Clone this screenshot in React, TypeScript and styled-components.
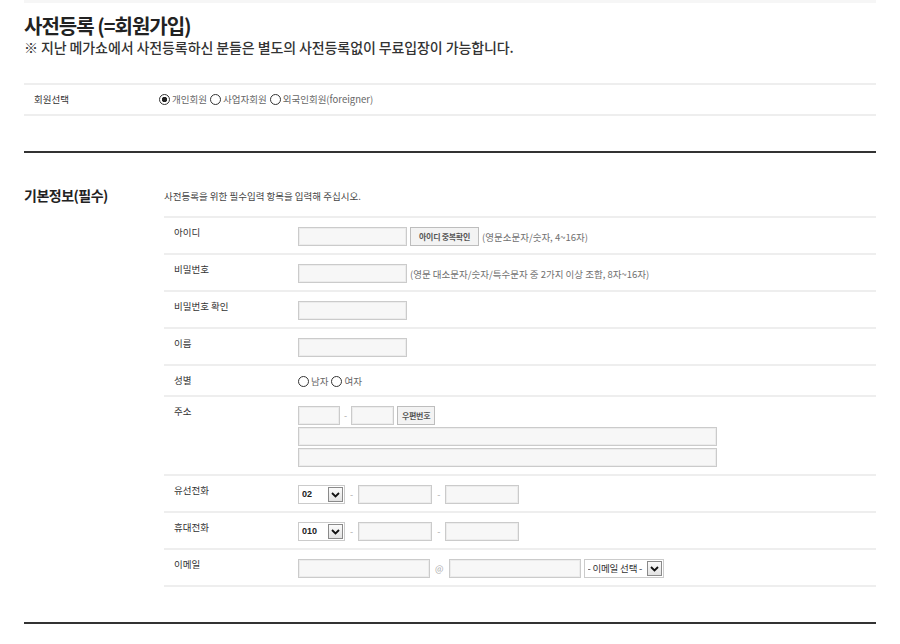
import styled, { createGlobalStyle } from 'styled-components'

const GlobalStyle = createGlobalStyle`
  body {
    margin: 0;
    background: #fff;
    font-family: "Noto Sans CJK KR", "Noto Sans", sans-serif;
    color: #333;
  }
  * {
    box-sizing: border-box;
  }
`

const Page = styled.main`
  width: 900px;
  padding: 0 24px;
`

const TopRule = styled.div`
  height: 3px;
  background: #f6f6f6;
`

const Header = styled.header`
  padding-top: 11px;
`

const Title = styled.h1`
  margin: 0;
  font-size: 20px;
  line-height: 24px;
  font-weight: 700;
  color: #222;
  letter-spacing: -1px;
`

const Notice = styled.p`
  margin: 1px 0 0;
  font-size: 14px;
  line-height: 17px;
  font-weight: 500;
  color: #333;
  letter-spacing: -0.1px;
`

const MemberRow = styled.div`
  display: flex;
  align-items: center;
  margin-top: 27px;
  padding: 7px 0 8px 10px;
  border-top: 2px solid #eee;
  border-bottom: 2px solid #eee;
  font-size: 9.5px;
  line-height: 14px;
`

const MemberLabel = styled.span`
  width: 125px;
  color: #333;
`

const RadioGroup = styled.div`
  display: flex;
  align-items: center;
  gap: 3px;
`

const RadioLabel = styled.label`
  display: inline-flex;
  align-items: center;
  gap: 2px;
  font-size: 9.5px;
  line-height: 14px;
  color: #666;
`

const Radio = styled.input.attrs({ type: 'radio' })`
  appearance: none;
  margin: 0;
  width: 11px;
  height: 11px;
  border: 1px solid #333;
  border-radius: 50%;
  background: #fff;

  &:checked {
    background: radial-gradient(circle, #222 0 2.4px, #fff 3px);
  }
`

const Section = styled.section`
  display: grid;
  grid-template-columns: 140px 1fr;
  margin-top: 35px;
  padding: 32px 0 35px;
  border-top: 2px solid #333;
  border-bottom: 2px solid #333;
`

const SectionTitle = styled.h2`
  margin: 0;
  font-size: 14px;
  line-height: 20px;
  font-weight: 700;
  color: #222;
  letter-spacing: -0.5px;
`

const SectionBody = styled.div`
  padding-top: 4px;
`

const Guide = styled.p`
  margin: 0 0 13px;
  font-size: 9.5px;
  line-height: 14px;
  color: #444;
`

const FormTable = styled.div`
  border-top: 2px solid #eee;
`

const FormRow = styled.div`
  display: flex;
  border-bottom: 2px solid #eee;
`

const RowLabel = styled.div`
  width: 134px;
  padding: 7px 0 0 10px;
  font-size: 9.5px;
  line-height: 14px;
  color: #333;
`

const RowField = styled.div<{ $tight?: boolean }>`
  flex: 1;
  display: flex;
  flex-direction: column;
  gap: 2px;
  padding: ${({ $tight }) => ($tight ? '8px 0 7px' : '9px 0 7px')};
`

const FieldLine = styled.div`
  display: flex;
  align-items: center;
  gap: 3px;
`

const TextInput = styled.input.attrs({ type: 'text' })<{ $w: number }>`
  flex: none;
  width: ${({ $w }) => $w}px;
  height: 19px;
  margin: 0;
  padding: 0 4px;
  border: 1px solid #cbcbcb;
  box-shadow: inset 0 0 0 1px #ececec;
  background: #f7f7f7;
  font-size: 9.5px;
  font-family: inherit;
`

const SmallButton = styled.button<{ $w: number }>`
  flex: none;
  width: ${({ $w }) => $w}px;
  height: 19px;
  margin: 0;
  padding: 0;
  border: 1px solid #bdbdbd;
  background: #f3f3f3;
  font-family: inherit;
  font-size: 8px;
  font-weight: 700;
  color: #555;
  letter-spacing: -0.3px;
`

const Helper = styled.span`
  font-size: 9.5px;
  line-height: 14px;
  color: #707070;
  white-space: nowrap;
`

const Joiner = styled.span<{ $gap: number }>`
  margin: 0 ${({ $gap }) => $gap}px;
  font-size: 9px;
  line-height: 14px;
  color: #aaa;
`

const SelectWrap = styled.div<{ $w: number }>`
  position: relative;
  flex: none;
  width: ${({ $w }) => $w}px;
  height: 19px;
`

const Select = styled.select`
  appearance: none;
  display: block;
  width: 100%;
  height: 19px;
  margin: 0;
  padding: 0 0 0 3px;
  border: 1px solid #cbcbcb;
  border-radius: 0;
  background: #fff;
  font-family: "Liberation Sans", "Noto Sans CJK KR", sans-serif;
  font-size: 9px;
  line-height: 17px;
  font-weight: 700;
  color: #222;
`

const EmailSelect = styled(Select)`
  font-family: "Noto Sans CJK KR", sans-serif;
  font-weight: 400;
  font-size: 9.5px;
  letter-spacing: -0.2px;
  color: #333;
`

const ArrowBox = styled.span`
  position: absolute;
  top: 2px;
  right: 2px;
  width: 15px;
  height: 15px;
  display: grid;
  place-items: center;
  border: 1px solid #8a8a8a;
  background: linear-gradient(#fbfbfb, #e2e2e2);
  pointer-events: none;
`

function Arrow() {
  return (
    <ArrowBox>
      <svg width="9" height="6" viewBox="0 0 9 6">
        <path d="M1 1 L4.5 4.5 L8 1" fill="none" stroke="#111" strokeWidth="1.8" />
      </svg>
    </ArrowBox>
  )
}

function PhoneField({ first }: { first: string }) {
  return (
    <FieldLine>
      <SelectWrap $w={47}>
        <Select defaultValue={first}>
          <option>{first}</option>
        </Select>
        <Arrow />
      </SelectWrap>
      <Joiner $gap={2}>-</Joiner>
      <TextInput $w={74} />
      <Joiner $gap={2}>-</Joiner>
      <TextInput $w={74} />
    </FieldLine>
  )
}

function App() {
  return (
    <>
      <GlobalStyle />
      <Page>
        <TopRule />
        <Header>
          <Title>사전등록 (=회원가입)</Title>
          <Notice>※ 지난 메가쇼에서 사전등록하신 분들은 별도의 사전등록없이 무료입장이 가능합니다.</Notice>
        </Header>

        <MemberRow>
          <MemberLabel>회원선택</MemberLabel>
          <RadioGroup>
            <RadioLabel>
              <Radio name="memberType" defaultChecked />
              개인회원
            </RadioLabel>
            <RadioLabel>
              <Radio name="memberType" />
              사업자회원
            </RadioLabel>
            <RadioLabel>
              <Radio name="memberType" />
              외국인회원(foreigner)
            </RadioLabel>
          </RadioGroup>
        </MemberRow>

        <Section>
          <SectionTitle>기본정보(필수)</SectionTitle>
          <SectionBody>
            <Guide>사전등록을 위한 필수입력 항목을 입력해 주십시오.</Guide>
            <FormTable>
              <FormRow>
                <RowLabel>아이디</RowLabel>
                <RowField>
                  <FieldLine>
                    <TextInput $w={109} />
                    <SmallButton $w={69}>아이디 중복확인</SmallButton>
                    <Helper>(영문소문자/숫자, 4~16자)</Helper>
                  </FieldLine>
                </RowField>
              </FormRow>
              <FormRow>
                <RowLabel>비밀번호</RowLabel>
                <RowField>
                  <FieldLine>
                    <TextInput $w={109} />
                    <Helper>(영문 대소문자/숫자/특수문자 중 2가지 이상 조합, 8자~16자)</Helper>
                  </FieldLine>
                </RowField>
              </FormRow>
              <FormRow>
                <RowLabel>비밀번호 확인</RowLabel>
                <RowField>
                  <FieldLine>
                    <TextInput $w={109} />
                  </FieldLine>
                </RowField>
              </FormRow>
              <FormRow>
                <RowLabel>이름</RowLabel>
                <RowField>
                  <FieldLine>
                    <TextInput $w={109} />
                  </FieldLine>
                </RowField>
              </FormRow>
              <FormRow>
                <RowLabel>성별</RowLabel>
                <RowField $tight>
                  <FieldLine>
                    <RadioLabel>
                      <Radio name="gender" />
                      남자
                    </RadioLabel>
                    <RadioLabel>
                      <Radio name="gender" />
                      여자
                    </RadioLabel>
                  </FieldLine>
                </RowField>
              </FormRow>
              <FormRow>
                <RowLabel>주소</RowLabel>
                <RowField>
                  <FieldLine>
                    <TextInput $w={42} />
                    <Joiner $gap={1}>-</Joiner>
                    <TextInput $w={43} />
                    <SmallButton $w={38}>우편번호</SmallButton>
                  </FieldLine>
                  <TextInput $w={419} />
                  <TextInput $w={419} />
                </RowField>
              </FormRow>
              <FormRow>
                <RowLabel>유선전화</RowLabel>
                <RowField>
                  <PhoneField first="02" />
                </RowField>
              </FormRow>
              <FormRow>
                <RowLabel>휴대전화</RowLabel>
                <RowField>
                  <PhoneField first="010" />
                </RowField>
              </FormRow>
              <FormRow>
                <RowLabel>이메일</RowLabel>
                <RowField>
                  <FieldLine>
                    <TextInput $w={132} />
                    <Joiner $gap={2}>@</Joiner>
                    <TextInput $w={132} />
                    <SelectWrap $w={80}>
                      <EmailSelect defaultValue="- 이메일 선택 -">
                        <option>- 이메일 선택 -</option>
                      </EmailSelect>
                      <Arrow />
                    </SelectWrap>
                  </FieldLine>
                </RowField>
              </FormRow>
            </FormTable>
          </SectionBody>
        </Section>
      </Page>
    </>
  )
}

export default App
